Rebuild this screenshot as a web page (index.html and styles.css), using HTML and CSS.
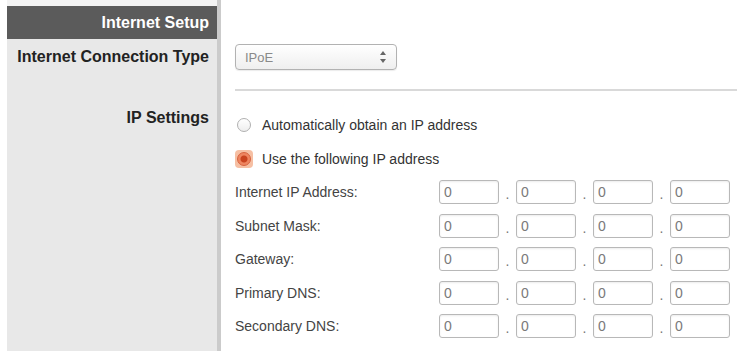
FILE: index.html
```html
<!DOCTYPE html>
<html lang="en">
<head>
    <meta charset="UTF-8">
    <title>Internet Setup</title>
    <link rel="stylesheet" href="styles.css">
</head>
<body>
    <div class="setup">
        <!-- top strip -->
        <div class="side top"></div>
        <div class="main"></div>

        <div class="side head">Internet Setup</div>
        <div class="main"></div>

        <div class="side label conn-label">Internet Connection Type</div>
        <div class="main conn">
            <div class="select">
                <span>IPoE</span>
                <svg class="arrows" width="8" height="14" viewBox="0 0 8 14">
                    <path d="M4 1 L7 5 L1 5 Z" fill="#666"/>
                    <path d="M4 13 L7 9 L1 9 Z" fill="#666"/>
                </svg>
            </div>
            <div class="line"></div>
        </div>

        <div class="side label ip-label">IP Settings</div>
        <div class="main ip">
            <label class="row radio">
                <span class="ring"><span class="dot"></span></span>
                Automatically obtain an IP address
            </label>
            <label class="row radio checked">
                <span class="ring"><span class="dot"></span></span>
                Use the following IP address
            </label>
            <div class="row field">
                <span class="name">Internet IP Address:</span>
                <input class="oct" value="0"><span class="sep">.</span><input class="oct" value="0"><span class="sep">.</span><input class="oct" value="0"><span class="sep">.</span><input class="oct" value="0">
            </div>
            <div class="row field">
                <span class="name">Subnet Mask:</span>
                <input class="oct" value="0"><span class="sep">.</span><input class="oct" value="0"><span class="sep">.</span><input class="oct" value="0"><span class="sep">.</span><input class="oct" value="0">
            </div>
            <div class="row field">
                <span class="name">Gateway:</span>
                <input class="oct" value="0"><span class="sep">.</span><input class="oct" value="0"><span class="sep">.</span><input class="oct" value="0"><span class="sep">.</span><input class="oct" value="0">
            </div>
            <div class="row field">
                <span class="name">Primary DNS:</span>
                <input class="oct" value="0"><span class="sep">.</span><input class="oct" value="0"><span class="sep">.</span><input class="oct" value="0"><span class="sep">.</span><input class="oct" value="0">
            </div>
            <div class="row field">
                <span class="name">Secondary DNS:</span>
                <input class="oct" value="0"><span class="sep">.</span><input class="oct" value="0"><span class="sep">.</span><input class="oct" value="0"><span class="sep">.</span><input class="oct" value="0">
            </div>
        </div>
    </div>
</body>
</html>
```
FILE: styles.css
```css
body {
    margin: 0;
    font-family: "Liberation Sans", Arial, sans-serif;
    background: #fff;
    color: #3a3a3a;
}
.setup {
    display: grid;
    grid-template-columns: 214px 1fr;
    grid-template-rows: 6px 33px auto 1fr;
    min-height: 100vh;
    margin-left: 7px;
}
.side {
    box-sizing: border-box;
    background-color: #e8e8e8;
    border-right: 4px solid #cbcbcb;
    padding-right: 8px;
    text-align: right;
    font-weight: bold;
    font-size: 16px;
    color: #222;
}
.side.top {
    background-color: #f3f3f3;
}
.side.head {
    background-color: #5b5b5b;
    color: #fff;
    line-height: 33px;
}
.label {
    line-height: 18px;
}
.conn-label {
    padding-top: 9px;
}
.ip-label {
    padding-top: 18px;
}
.main {
    padding-left: 14px;
}
.conn {
    padding-top: 5px;
}
.select {
    box-sizing: border-box;
    width: 162px;
    height: 26px;
    border: 1px solid #b2b2b2;
    border-radius: 4px;
    background: linear-gradient(#fff, #efefef);
    box-shadow: 0 1px 1px rgba(0, 0, 0, 0.08);
    display: flex;
    align-items: center;
    justify-content: space-between;
    padding: 0 9px 0 9px;
    font-size: 13px;
    color: #8a8a8a;
}
.line {
    height: 2px;
    background-color: #d9d9d9;
    margin: 19px 3px 0 0;
}
.ip {
    padding-top: 17.5px;
}
.row {
    height: 33.5px;
    display: flex;
    align-items: center;
    font-size: 14px;
}
.radio {
    gap: 9px;
    color: #333;
}
.ring {
    width: 18px;
    height: 18px;
    border-radius: 4px;
    display: flex;
    align-items: center;
    justify-content: center;
}
.dot {
    box-sizing: border-box;
    width: 14px;
    height: 14px;
    border-radius: 50%;
    border: 1px solid #b0b0b0;
    background: linear-gradient(#fff, #eee);
}
.checked .ring {
    background-color: #f6bfa3;
}
.checked .dot {
    border-color: #d6623e;
    background: radial-gradient(circle, #c9431f 0 3px, #ee8560 4px);
}
.name {
    width: 204px;
    color: #444;
}
.oct {
    box-sizing: border-box;
    width: 60px;
    height: 24px;
    margin: 0;
    border: 1px solid #b8b8b8;
    border-radius: 3px;
    box-shadow: inset 0 1px 2px rgba(0, 0, 0, 0.08);
    padding: 0 0 0 4px;
    font-family: inherit;
    font-size: 14px;
    color: #7a7a7a;
}
.sep {
    width: 17px;
    text-align: center;
    color: #777;
    padding-top: 4px;
}
```
